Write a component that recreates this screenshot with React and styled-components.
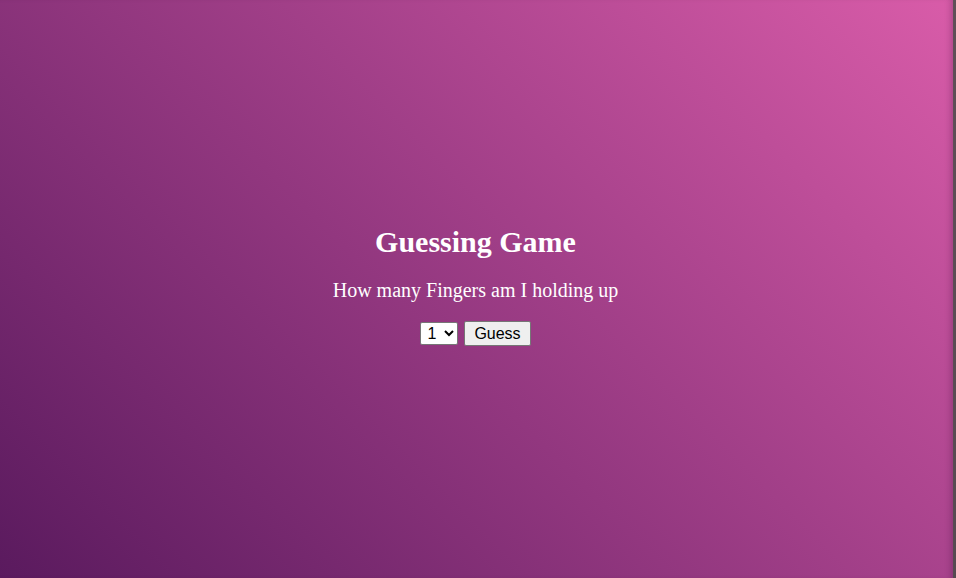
import React from 'react';
import styled, { createGlobalStyle } from 'styled-components';

const GlobalStyle = createGlobalStyle`
	html, body {
		margin: 0;
		padding: 0;
	}
	body {
		font-family: 'Liberation Serif', 'Times New Roman', serif;
	}
`;

const Page = styled.div`
	width: 956px;
	height: 578px;
	box-sizing: border-box;
	display: flex;
	flex-direction: column;
	align-items: center;
	justify-content: center;
	background: linear-gradient(45deg, #5a1a5e, #d95ca9);
	/* dark edge on the right */
	box-shadow: inset -3px 0 0 rgba(70, 80, 70, 0.75), inset -9px 0 6px -4px rgba(40, 10, 40, 0.25);
	color: #fff;
	padding: 0 5px 7px 0;
`;

const Title = styled.h1`
	margin: 0;
	font-size: 30px;
	line-height: 34px;
	font-weight: bold;
`;

const Question = styled.p`
	margin: 20px 0 0;
	font-size: 20px;
	line-height: 23px;
`;

const Controls = styled.div`
	margin-top: 19px;
	display: flex;
	align-items: center;
	gap: 6px;
`;

const Select = styled.select`
	font-family: 'Liberation Sans', Arial, sans-serif;
	font-size: 16px;
	height: 23px;
	width: 38px;
	padding: 0 2px;
	background: #fff;
	border: 1px solid #767676;
	border-radius: 2px;
	color: #000;
`;

const Button = styled.button`
	font-family: 'Liberation Sans', Arial, sans-serif;
	font-size: 16px;
	height: 25px;
	padding: 0 9px;
	background: #efefef;
	border: 1px solid #767676;
	border-radius: 2px;
	color: #000;
`;

export default function App() {
	return (
		<>
			<GlobalStyle />
			<Page>
				<Title>Guessing Game</Title>
				<Question>How many Fingers am I holding up</Question>
				<Controls>
					<Select defaultValue="1">
						<option value="1">1</option>
						<option value="2">2</option>
						<option value="3">3</option>
						<option value="4">4</option>
						<option value="5">5</option>
					</Select>
					<Button>Guess</Button>
				</Controls>
			</Page>
		</>
	);
}
